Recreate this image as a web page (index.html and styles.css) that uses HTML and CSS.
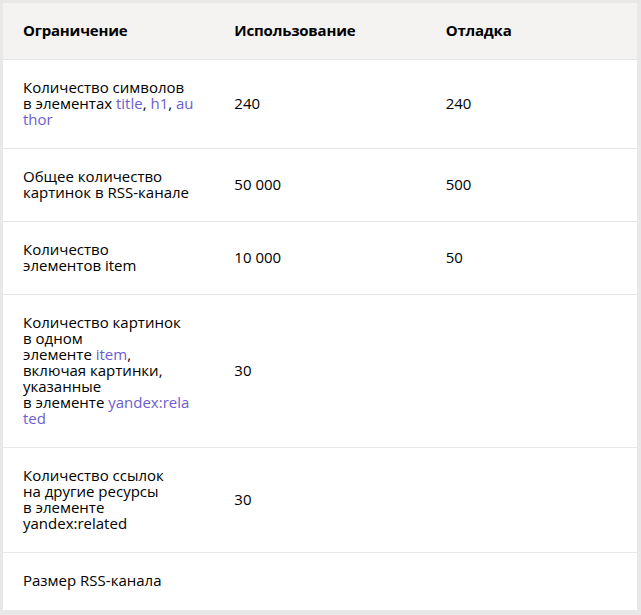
FILE: index.html
```html
<!DOCTYPE html>
<html lang="ru">
<head>
<meta charset="utf-8">
<link rel="stylesheet" href="styles.css">
</head>
<body>
<table class="limits">
  <thead>
    <tr><th>Ограничение</th><th>Использование</th><th>Отладка</th></tr>
  </thead>
  <tbody>
    <tr>
      <td>Количество символов<br>в элементах <a class="lnk">title</a>, <a class="lnk">h1</a>, <a class="lnk">au<br>thor</a></td>
      <td>240</td>
      <td>240</td>
    </tr>
    <tr>
      <td>Общее количество<br>картинок в RSS-канале</td>
      <td>50 000</td>
      <td>500</td>
    </tr>
    <tr>
      <td>Количество<br>элементов item</td>
      <td>10 000</td>
      <td>50</td>
    </tr>
    <tr>
      <td>Количество картинок<br>в одном<br>элементе <a class="lnk">item</a>,<br>включая картинки,<br>указанные<br>в элементе <a class="lnk">yandex:rela<br>ted</a></td>
      <td>30</td>
      <td></td>
    </tr>
    <tr>
      <td>Количество ссылок<br>на другие ресурсы<br>в элементе<br>yandex:related</td>
      <td>30</td>
      <td></td>
    </tr>
    <tr>
      <td>Размер RSS-канала</td>
      <td></td>
      <td></td>
    </tr>
  </tbody>
</table>
</body>
</html>
```
FILE: styles.css
```css
html, body {
  margin: 0;
  padding: 0;
  background: #e8e8e8;
}
body {
  padding: 3px 4px 5px 3px;
  font-family: "Open Sans", "Noto Sans", sans-serif;
  font-size: 15px;
  line-height: 16px;
  color: #000;
}
.limits {
  width: 634px;
  border-collapse: collapse;
  table-layout: fixed;
  background: #fff;
}
.limits th,
.limits td {
  padding: 19px 20px 21px;
  text-align: left;
  vertical-align: middle;
  border-bottom: 1px solid #e6e6e6;
}
.limits th {
  background: #f4f3f2;
  font-weight: 700;
  letter-spacing: -0.2px;
}
.limits tbody tr:last-child td {
  border-bottom: none;
  padding-bottom: 22px;
}
.lnk {
  color: #6c5ecf;
  text-decoration: none;
}
```
